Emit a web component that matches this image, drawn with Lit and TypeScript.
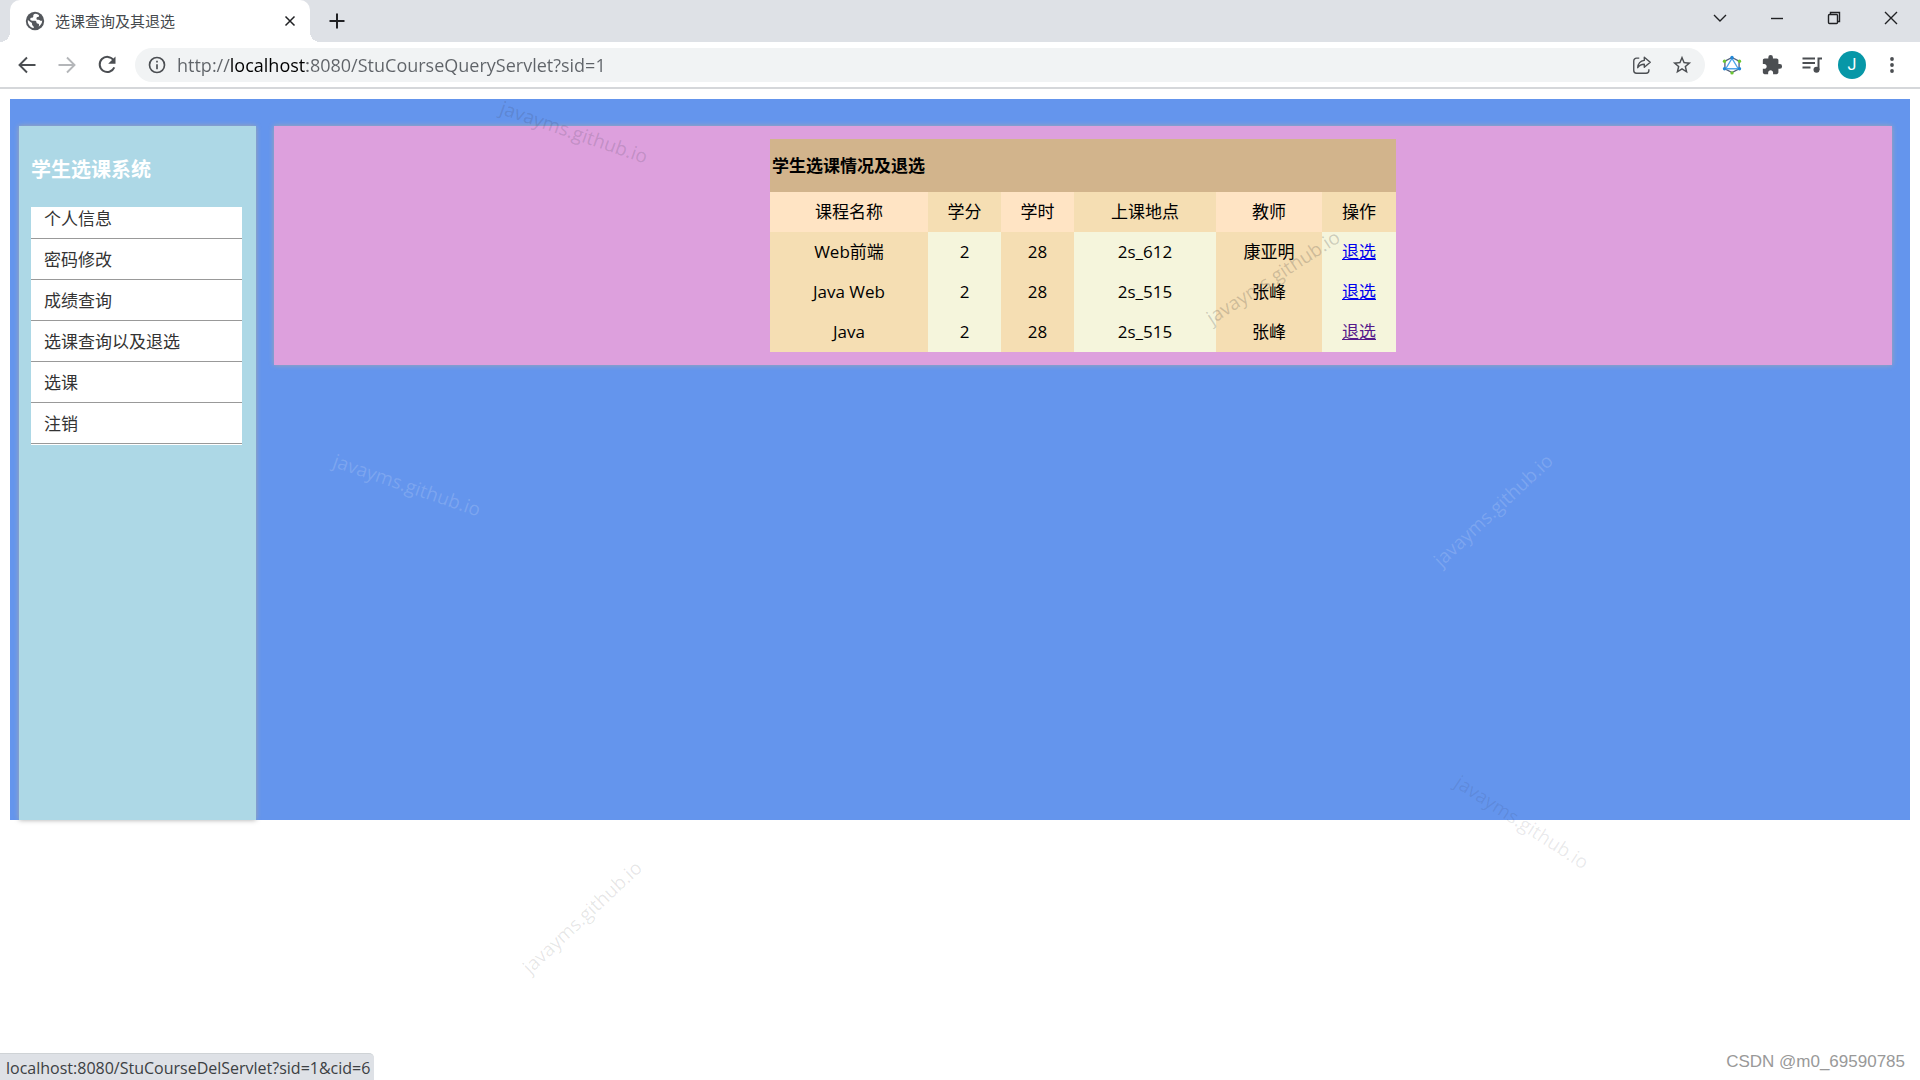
import { LitElement, html, css, svg } from "lit";
import { customElement } from "lit/decorators.js";
import { classMap } from "lit/directives/class-map.js";
import { styleMap } from "lit/directives/style-map.js";

const shared = css`
  :host {
    display: block;
    font-family: "Open Sans", "Noto Sans CJK SC", sans-serif;
  }
  * {
    box-sizing: border-box;
  }
  button {
    display: flex;
    align-items: center;
    justify-content: center;
    padding: 0;
    border: 0;
    background: none;
    color: inherit;
    font: inherit;
  }
  svg {
    display: block;
    flex: none;
  }
`;

const stroke = (size: number, body: unknown, width = 2) => html`
  <svg width=${size} height=${size} viewBox="0 0 24 24" fill="none" stroke="currentColor" stroke-width=${width} aria-hidden="true">${body}</svg>
`;

const solid = (size: number, body: unknown) => html`
  <svg width=${size} height=${size} viewBox="0 0 24 24" fill="currentColor" aria-hidden="true">${body}</svg>
`;

const icons = {
  globe: solid(
    22,
    svg`<circle cx="12" cy="12" r="10"/><path fill="#fff" d="M12.5 4.2c-1.6.3-2.6 1.3-2.4 2.6.2 1-.6 1.7-1.8 1.7-1 0-1.6.6-1.5 1.6.1 1.2 1 1.5 2.3 1.5h2.6c1.2 0 1.9.7 1.9 1.8 0 .9.5 1.4 1.4 1.4 1.1.1 1.6.7 1.4 1.7l-.4 1.7c2.6-1.7 3.900-4 3.800-6.900-.6.7-1.500.8-2.200.2-.7-.7-1.300-1-2.200-.9-1.200.1-1.900-.6-1.800-1.700.1-.9.7-1.300 1.700-1.300.8 0 1.200-.5 1.100-1.200-.1-1.100-1.500-2.200-3.900-2.200zM4.200 10.800c-.5 4 2 7.900 6.300 8.900.5-1 .2-1.800-.6-2.300-.9-.5-1.200-1-1.100-2 .1-1-.3-1.600-1.400-2z"/>`,
  ),
  cross: stroke(18, svg`<path d="M6 6l12 12M18 6L6 18"/>`, 2),
  plus: stroke(24, svg`<path d="M12 4.500v15M4.500 12h15"/>`, 2),
  chevron: stroke(24, svg`<path d="M6 9l6 6 6-6"/>`, 1.4),
  minimize: stroke(24, svg`<path d="M6 12.500h12"/>`, 1.4),
  restore: stroke(24, svg`<rect x="6.500" y="8.500" width="9" height="9" rx="1"/><path d="M8.500 8.500v-2h9v9h-2"/>`, 1.4),
  close: stroke(24, svg`<path d="M6 6l12 12M18 6L6 18"/>`, 1.4),
  back: stroke(24, svg`<path d="M20.500 12H5M12 4.500L4.500 12l7.500 7.500"/>`, 1.9),
  forward: stroke(24, svg`<path d="M3.500 12H19M12 4.500l7.500 7.500-7.500 7.500"/>`, 1.9),
  reload: html`
    <svg width="24" height="24" viewBox="0 0 24 24" aria-hidden="true">
      <path d="M18.600 7.200A7.600 7.600 0 1 0 19.300 14.400" fill="none" stroke="currentColor" stroke-width="2" />
      <path d="M20.500 3.500v7.300h-7.300z" fill="currentColor" />
    </svg>
  `,
  info: solid(
    20,
    svg`<path d="M11 17h2v-6h-2zm1-15a10 10 0 1 0 0 20 10 10 0 0 0 0-20zm0 18a8 8 0 1 1 0-16 8 8 0 0 1 0 16zM11 9h2V7h-2z"/>`,
  ),
  share: stroke(
    22,
    svg`<path d="M9 4.500H6A3 3 0 0 0 3 7.500v10.500A3 3 0 0 0 6 21h10.500a3 3 0 0 0 3-3V16.500"/><path stroke-linejoin="round" d="M14.500 3.500l6.500 5.500-6.500 5.500v-3.300c-3.300 0-5.400 1-7.200 3.800.4-4.700 2.900-7.400 7.200-8z"/>`,
    1.5,
  ),
  star: solid(
    22,
    svg`<path d="M22 9.240l-7.190-.62L12 2 9.190 8.630 2 9.240l5.460 4.730L5.820 21 12 17.270 18.180 21l-1.630-7.030zM12 15.400l-3.760 2.270 1-4.280-3.320-2.880 4.380-.38L12 6.100l1.710 4.040 4.380.38-3.320 2.880 1 4.280z"/>`,
  ),
  hexagon: html`
    <svg width="20" height="20" viewBox="0 0 24 24" fill="none" aria-hidden="true">
      <path d="M12 3l8.500 4.500v9L12 21l-8.500-4.500v-9z" stroke="#52617c" stroke-width="1.600" />
      <path d="M12 4l7.500 12.500h-15z" fill="#fff" stroke="#4fa5ea" stroke-width="1.600" />
      <circle cx="12" cy="3" r="2" fill="#2188d8" />
      <circle cx="3" cy="16.500" r="2" fill="#2188d8" />
      <circle cx="21" cy="16.500" r="2" fill="#2188d8" />
      <circle cx="3" cy="7.500" r="2" fill="#6cc632" />
      <circle cx="21" cy="7.500" r="2" fill="#6cc632" />
      <circle cx="12" cy="21.500" r="2" fill="#6cc632" />
    </svg>
  `,
  puzzle: solid(
    22,
    svg`<path d="M20.500 11H19V7c0-1.100-.9-2-2-2h-4V3.500a2.500 2.500 0 0 0-5 0V5H4c-1.100 0-1.990.9-1.990 2v3.800H3.500c1.490 0 2.700 1.210 2.700 2.700s-1.210 2.700-2.700 2.700H2V20c0 1.100.9 2 2 2h3.800v-1.500c0-1.490 1.210-2.700 2.700-2.700s2.700 1.210 2.700 2.700V22H17c1.100 0 2-.9 2-2v-4h1.500a2.500 2.500 0 0 0 0-5z"/>`,
  ),
  playlist: html`
    <svg width="24" height="24" viewBox="0 0 24 24" fill="none" stroke="currentColor" aria-hidden="true">
      <path d="M2.500 5.500h12.500M2.500 10h12.500M2.500 14.500h8" stroke-width="1.800" />
      <path d="M18.500 17V5.500h3.500" stroke-width="2" />
      <circle cx="16.500" cy="16.800" r="3" fill="currentColor" stroke="none" />
    </svg>
  `,
  more: solid(24, svg`<circle cx="12" cy="6" r="1.900"/><circle cx="12" cy="12" r="1.900"/><circle cx="12" cy="18" r="1.900"/>`),
};

@customElement("browser-chrome")
class BrowserChrome extends LitElement {
  static styles = [
    shared,
    css`
      .strip {
        display: flex;
        height: 42px;
        padding-left: 10px;
        background: #dee1e6;
        color: #202124;
      }
      .tab {
        position: relative;
        display: flex;
        align-items: center;
        gap: 9px;
        width: 300px;
        padding: 0 10px 0 14px;
        border-radius: 10px 10px 0 0;
        background: #fff;
      }
      .tab::before,
      .tab::after {
        content: "";
        position: absolute;
        bottom: 0;
        width: 10px;
        height: 10px;
      }
      .tab::before {
        right: 100%;
        background: radial-gradient(circle at 0 0, #dee1e6 10px, #fff 10px);
      }
      .tab::after {
        left: 100%;
        background: radial-gradient(circle at 100% 0, #dee1e6 10px, #fff 10px);
      }
      .favicon {
        color: #54575c;
      }
      .title {
        flex: 1;
        font-size: 15px;
        line-height: 20px;
        color: #45494d;
      }
      .tab-close {
        width: 20px;
        height: 20px;
      }
      .new-tab {
        width: 54px;
      }
      .windows {
        display: flex;
        height: 36px;
        margin: 0 1px 0 auto;
      }
      .windows button {
        width: 57px;
      }
      .toolbar {
        display: flex;
        align-items: center;
        height: 47px;
        padding: 0 8px 0 7px;
        border-bottom: 2px solid #d5d7da;
        background: #fff;
        color: #4b4e52;
      }
      .tool {
        width: 40px;
        height: 34px;
      }
      .disabled {
        color: #b4b6b9;
      }
      .omnibox {
        display: flex;
        flex: 1;
        align-items: center;
        height: 34px;
        margin: 0 7px 0 8px;
        padding: 0 3px 0 12px;
        border-radius: 17px;
        background: #f1f3f4;
      }
      .address {
        flex: 1;
        min-width: 0;
        margin-left: 10px;
        padding: 0;
        border: 0;
        outline: 0;
        background: linear-gradient(90deg, #5f6368 54px, #000 54px, #000 130px, #5f6368 130px);
        -webkit-background-clip: text;
        background-clip: text;
        -webkit-text-fill-color: transparent;
        font: 18px/26px "Open Sans", sans-serif;
      }
      .avatar {
        display: flex;
        align-items: center;
        justify-content: center;
        width: 28px;
        height: 28px;
        border-radius: 50%;
        background: #0797a7;
        color: #fff;
        font: 16px/28px Roboto, sans-serif;
      }
    `,
  ];

  render() {
    return html`
      <header>
        <div class="strip">
          <div class="tab">
            <span class="favicon">${icons.globe}</span>
            <span class="title">选课查询及其退选</span>
            <button class="tab-close" aria-label="关闭标签页">${icons.cross}</button>
          </div>
          <button class="new-tab" aria-label="新标签页">${icons.plus}</button>
          <div class="windows">
            <button aria-label="搜索标签页">${icons.chevron}</button>
            <button aria-label="最小化">${icons.minimize}</button>
            <button aria-label="还原">${icons.restore}</button>
            <button aria-label="关闭">${icons.close}</button>
          </div>
        </div>
        <div class="toolbar">
          <button class="tool" aria-label="后退">${icons.back}</button>
          <button class="tool disabled" aria-label="前进" disabled>${icons.forward}</button>
          <button class="tool" aria-label="重新加载">${icons.reload}</button>
          <div class="omnibox">
            ${icons.info}
            <input class="address" type="text" aria-label="地址" value="http://localhost:8080/StuCourseQueryServlet?sid=1" />
            <button class="tool" aria-label="分享">${icons.share}</button>
            <button class="tool" aria-label="收藏">${icons.star}</button>
          </div>
          <button class="tool" aria-label="扩展">${icons.hexagon}</button>
          <button class="tool" aria-label="扩展程序">${icons.puzzle}</button>
          <button class="tool" aria-label="媒体">${icons.playlist}</button>
          <button class="tool" aria-label="账户"><span class="avatar">J</span></button>
          <button class="tool" aria-label="更多">${icons.more}</button>
        </div>
      </header>
    `;
  }
}

const menu = ["个人信息", "密码修改", "成绩查询", "选课查询以及退选", "选课", "注销"];

@customElement("side-menu")
class SideMenu extends LitElement {
  static styles = [
    shared,
    css`
      :host {
        background: lightblue;
        box-shadow: 0 0 5px #a9a9a9;
      }
      nav {
        padding: 30px 14px 30px 12px;
      }
      h1 {
        margin: 0 0 23px;
        color: #fff;
        font-size: 20px;
        line-height: 28px;
      }
      ul {
        margin: 0;
        padding: 0 0 1px;
        background: #fff;
        list-style: none;
      }
      li {
        display: flex;
        align-items: flex-end;
        height: 41px;
        padding: 0 0 6px 13px;
        border-bottom: 1px solid #999;
      }
      li:first-child {
        height: 32px;
      }
      a {
        color: #333;
        font-size: 17px;
        line-height: 26px;
        text-decoration: none;
      }
    `,
  ];

  render() {
    return html`
      <nav>
        <h1>学生选课系统</h1>
        <ul>
          ${menu.map((name) => html`<li><a href="#">${name}</a></li>`)}
        </ul>
      </nav>
    `;
  }
}

const columns = ["课程名称", "学分", "学时", "上课地点", "教师", "操作"];
const courses = [
  { cells: ["Web前端", "2", "28", "2s_612", "康亚明"], visited: false },
  { cells: ["Java Web", "2", "28", "2s_515", "张峰"], visited: false },
  { cells: ["Java", "2", "28", "2s_515", "张峰"], visited: true },
];

@customElement("course-table")
class CourseTable extends LitElement {
  static styles = [
    shared,
    css`
      :host {
        padding: 13px 0;
        background: plum;
        box-shadow: 0 0 5px #a9a9a9;
      }
      table {
        width: 626px;
        max-width: 100%;
        margin: 0 auto;
        border-collapse: collapse;
        table-layout: fixed;
        color: #000;
        font-size: 17px;
        line-height: 24px;
      }
      caption {
        padding: 15px 2px 14px;
        background: tan;
        font-weight: bold;
        text-align: left;
      }
      th,
      td {
        height: 40px;
        padding: 0;
        font-weight: normal;
        text-align: center;
      }
      th:nth-child(odd) {
        background: bisque;
      }
      th:nth-child(even),
      td:nth-child(odd) {
        background: wheat;
      }
      td:nth-child(even) {
        background: beige;
      }
      .name {
        width: 158px;
      }
      .number {
        width: 73px;
      }
      .place {
        width: 142px;
      }
      .teacher {
        width: 106px;
      }
      a {
        color: #0000ee;
      }
      .visited {
        color: #551a8b;
      }
    `,
  ];

  render() {
    return html`
      <table>
        <caption>学生选课情况及退选</caption>
        <colgroup>
          <col class="name" />
          <col class="number" />
          <col class="number" />
          <col class="place" />
          <col class="teacher" />
          <col />
        </colgroup>
        <thead>
          <tr>
            ${columns.map((name) => html`<th scope="col">${name}</th>`)}
          </tr>
        </thead>
        <tbody>
          ${courses.map(
            (course) => html`
              <tr>
                ${course.cells.map((cell) => html`<td>${cell}</td>`)}
                <td><a class=${classMap({ visited: course.visited })} href="#">退选</a></td>
              </tr>
            `,
          )}
        </tbody>
      </table>
    `;
  }
}

const marks = [
  { x: 574, y: 132, angle: 19, color: "rgba(60, 60, 80, 0.18)" },
  { x: 407, y: 485, angle: 19, color: "rgba(255, 255, 255, 0.16)" },
  { x: 582, y: 917, angle: -43, color: "rgba(0, 0, 0, 0.1)" },
  { x: 1493, y: 510, angle: -43, color: "rgba(255, 255, 255, 0.16)" },
  { x: 1273, y: 277, angle: -33, color: "rgba(60, 60, 60, 0.22)" },
  { x: 1522, y: 822, angle: 33, color: "rgba(40, 40, 60, 0.1)" },
];

@customElement("app-root")
class AppRoot extends LitElement {
  static styles = [
    shared,
    css`
      :host {
        position: relative;
        min-height: 100vh;
        overflow: hidden;
        background: #fff;
      }
      .page {
        padding: 10px;
      }
      .workspace {
        display: flex;
        align-items: flex-start;
        gap: 18px;
        min-height: 721px;
        padding: 27px 18px 0 9px;
        background: cornflowerblue;
      }
      side-menu {
        flex: none;
        align-self: stretch;
        width: 237px;
      }
      course-table {
        flex: 1;
        min-width: 0;
      }
      .mark {
        position: absolute;
        font-size: 19px;
        line-height: 28px;
        white-space: nowrap;
        pointer-events: none;
      }
      .status {
        position: absolute;
        bottom: 0;
        left: 0;
        padding: 2px 4px 0 6px;
        border-top: 1px solid #cfd3d6;
        border-top-right-radius: 5px;
        background: #dee1e6;
        color: #3c4043;
        font-size: 16px;
        line-height: 24px;
      }
      .credit {
        position: absolute;
        right: 15px;
        bottom: 6px;
        color: #999;
        font: 17px/24px "Liberation Sans", sans-serif;
      }
    `,
  ];

  render() {
    return html`
      <browser-chrome></browser-chrome>
      <main class="page">
        <div class="workspace">
          <side-menu></side-menu>
          <course-table></course-table>
        </div>
      </main>
      ${marks.map(
        (mark) => html`<span
          class="mark"
          style=${styleMap({
            left: `${mark.x}px`,
            top: `${mark.y}px`,
            color: mark.color,
            transform: `translate(-50%, -50%) rotate(${mark.angle}deg)`,
          })}
          >javayms.github.io</span
        >`,
      )}
      <div class="status">localhost:8080/StuCourseDelServlet?sid=1&amp;cid=6</div>
      <div class="credit">CSDN @m0_69590785</div>
    `;
  }
}
